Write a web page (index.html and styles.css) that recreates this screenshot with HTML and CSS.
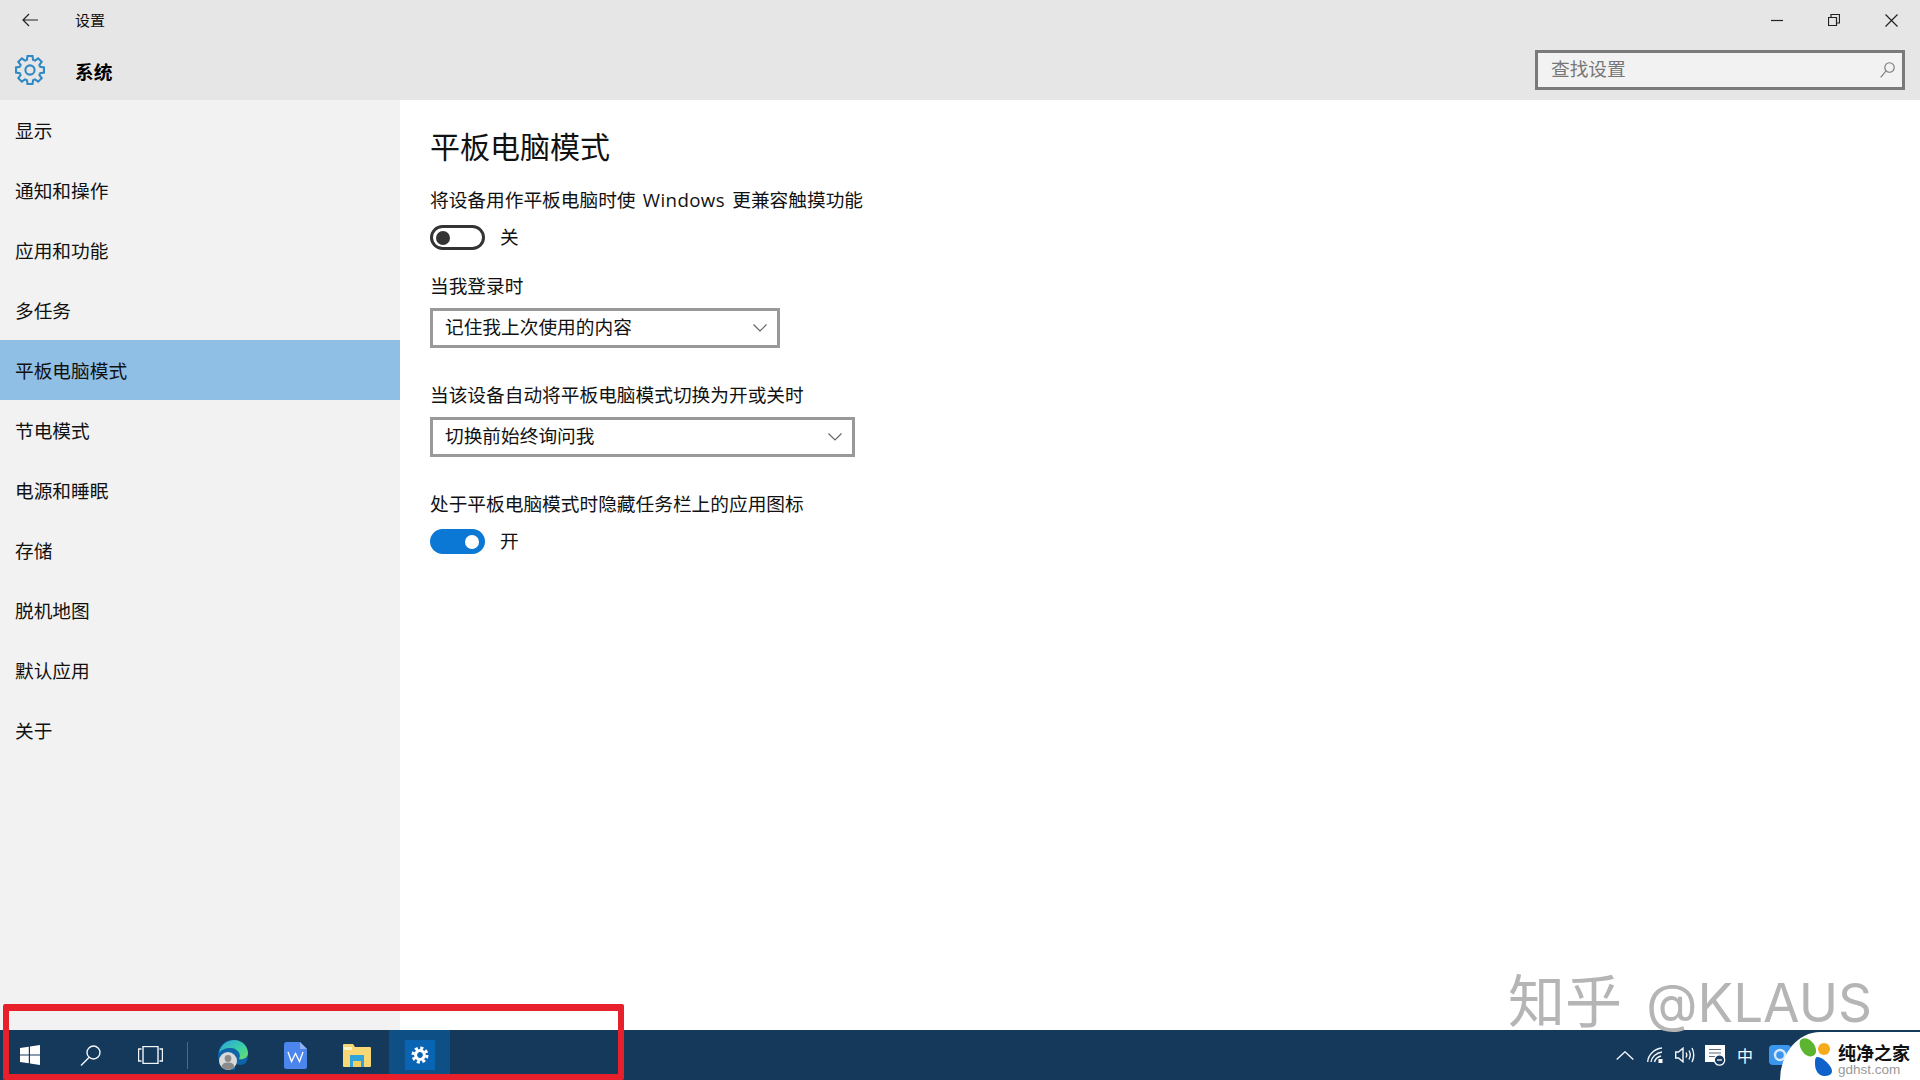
FILE: index.html

```html
<!DOCTYPE html>
<html lang="zh-CN">
<head>
  <meta charset="UTF-8" />
  <title>设置</title>
  <link rel="stylesheet" href="styles.css">
</head>
<body>

<svg class="defs" width="0" height="0">
  <defs>
    <path id="tooth" d="M-4.02-9.7 L-3.1-10.2 L-2.5-14 H2.5 L3.1-10.2 L4.02-9.7" />
  </defs>
</svg>

<div class="window">
  <header class="header">
    <div class="titlebar">
      <svg class="back" width="16" height="14" viewBox="0 0 16 14"><path d="M7 1 L1 7 L7 13 M1 7 H16" /></svg>
      <span class="app-name">设置</span>
      <div class="win-controls">
        <svg width="12" height="12" viewBox="0 0 12 12"><path d="M0 6.5 H12" /></svg>
        <svg width="12" height="12" viewBox="0 0 12 12"><path d="M.5 3.500 H8.500 V11.500 H.5 Z M3 3 V.5 H11.500 V9 H9" /></svg>
        <svg width="13" height="13" viewBox="0 0 13 13"><path d="M.5 .5 L12.500 12.500 M12.500 .5 L.5 12.500" /></svg>
      </div>
    </div>
    <div class="pagebar">
      <svg class="gear" width="30" height="30" viewBox="-15 -15 30 30">
        <circle r="4.6" />
        <use href="#tooth" />
        <use href="#tooth" transform="rotate(45)" />
        <use href="#tooth" transform="rotate(90)" />
        <use href="#tooth" transform="rotate(135)" />
        <use href="#tooth" transform="rotate(180)" />
        <use href="#tooth" transform="rotate(225)" />
        <use href="#tooth" transform="rotate(270)" />
        <use href="#tooth" transform="rotate(315)" />
      </svg>
      <span class="page-name">系统</span>
      <div class="search">
        <span>查找设置</span>
        <svg width="15" height="16" viewBox="0 0 15 16"><circle cx="9.5" cy="5.5" r="4.7" /><path d="M6 9 L.7 15.3" /></svg>
      </div>
    </div>
  </header>

  <div class="body-row">
    <nav class="sidebar">
      <div class="nav-item">显示</div>
      <div class="nav-item">通知和操作</div>
      <div class="nav-item">应用和功能</div>
      <div class="nav-item">多任务</div>
      <div class="nav-item active">平板电脑模式</div>
      <div class="nav-item">节电模式</div>
      <div class="nav-item">电源和睡眠</div>
      <div class="nav-item">存储</div>
      <div class="nav-item">脱机地图</div>
      <div class="nav-item">默认应用</div>
      <div class="nav-item">关于</div>
    </nav>

    <main class="content">
      <h1>平板电脑模式</h1>

      <div class="label first">将设备用作平板电脑时使 <span class="latin">Windows</span> 更兼容触摸功能</div>
      <div class="toggle-row">
        <div class="toggle"><i></i></div>
        <span>关</span>
      </div>

      <div class="label login">当我登录时</div>
      <div class="select select-short">
        <span>记住我上次使用的内容</span>
        <svg width="14" height="8" viewBox="0 0 14 8"><path d="M.5 .5 L7 7 L13.500 .5" /></svg>
      </div>

      <div class="label">当该设备自动将平板电脑模式切换为开或关时</div>
      <div class="select select-long">
        <span>切换前始终询问我</span>
        <svg width="14" height="8" viewBox="0 0 14 8"><path d="M.5 .5 L7 7 L13.500 .5" /></svg>
      </div>

      <div class="label">处于平板电脑模式时隐藏任务栏上的应用图标</div>
      <div class="toggle-row">
        <div class="toggle on"><i></i></div>
        <span>开</span>
      </div>
    </main>
  </div>
</div>

<footer class="taskbar">
  <div class="slot">
    <svg width="20" height="20" viewBox="0 0 20 20"><path class="white" d="M0 3 L8.800 1.700 V9.400 H0 Z M10 1.500 L20 0 V9.400 H10 Z M0 10.600 H8.800 V18.300 L0 17 Z M10 10.600 H20 V20 L10 18.500 Z" /></svg>
  </div>
  <div class="slot">
    <svg class="line" width="21" height="21" viewBox="0 0 21 21"><circle cx="13.5" cy="7.5" r="6.5" /><path d="M9 12.500 L1 20.500" /></svg>
  </div>
  <div class="slot">
    <svg class="line" width="25" height="18" viewBox="0 0 25 18"><rect x="5" y=".5" width="15" height="17" /><path d="M3.500 3 H.5 V15 H3.500 M21.500 3 H24.500 V15 H21.500" /></svg>
  </div>
  <div class="divider"></div>
  <div class="apps">
    <div class="slot">
      <svg width="32" height="32" viewBox="0 0 32 32">
        <defs>
          <linearGradient id="edgeTop" x1="0" y1="0" x2="1" y2="1">
            <stop offset="0" stop-color="#2f9fe0" />
            <stop offset=".55" stop-color="#38cfa8" />
            <stop offset="1" stop-color="#6fdc6a" />
          </linearGradient>
        </defs>
        <circle cx="16" cy="16" r="15" fill="#0f63a8" />
        <path d="M2 14 C4 4 12 1 17 1 C26 1 31 8 31 14 C31 19 26 21 22 20 C25 15 20 9 14 9 C8 9 4 11 2 14 Z" fill="url(#edgeTop)" />
        <path d="M18 31 C24 31 28 27 29 24 C25 27 20 26 18 24 Z" fill="#14395b" />
        <circle cx="11" cy="22" r="9" fill="#d9d9d9" />
        <circle cx="11" cy="19.5" r="3.4" fill="#8a8a8a" />
        <path d="M4.500 28 C5.500 24 8 23.500 11 23.500 C14 23.500 16.500 24 17.500 28 C14 31.500 8 31.500 4.500 28 Z" fill="#8a8a8a" />
      </svg>
    </div>
    <div class="slot">
      <svg width="23" height="27" viewBox="0 0 23 27">
        <path d="M2.500 0 H16 L23 7 V24.500 A2.500 2.500 0 0 1 20.500 27 H2.500 A2.500 2.500 0 0 1 0 24.500 V2.500 A2.500 2.500 0 0 1 2.500 0 Z" fill="#4c86ec" />
        <path d="M16 0 L23 7 H16 Z" fill="#8db1f3" />
        <path class="word-w" d="M4 10 L7.500 19.500 L11.500 11.500 L15.500 19.500 L19 10" />
      </svg>
    </div>
    <div class="slot">
      <svg width="28" height="23" viewBox="0 0 28 23">
        <path d="M0 1 A1 1 0 0 1 1 0 H10 L12 3 H27 A1 1 0 0 1 28 4 V22 A1 1 0 0 1 27 23 H1 A1 1 0 0 1 0 22 Z" fill="#f8d775" />
        <path d="M1 3 H9 V6 H1 Z" fill="#fdf3c4" />
        <path d="M7 11 H21 V23 H18 V17 H10 V23 H7 Z" fill="#2fa3dc" />
        <path d="M10 17 H18 V23 H10 Z" fill="#f2cf63" />
      </svg>
    </div>
    <div class="slot running">
      <div class="tile">
        <svg class="mini-gear" width="20" height="20" viewBox="-10 -10 20 20">
          <circle class="ring" r="4.4" />
          <circle class="cogs" r="7" />
        </svg>
      </div>
    </div>
  </div>

  <div class="tray">
    <div class="tray-slot">
      <svg class="line" width="18" height="9" viewBox="0 0 18 9"><path d="M.7 8.500 L9 .8 L17.300 8.500" /></svg>
    </div>
    <div class="tray-slot">
      <svg class="line" width="16" height="16" viewBox="0 0 16 16"><path d="M.7 15 C1 8 7 2 15 1 M4 15 C4.500 10 9 6 15 5 M7.500 15 C8 12.500 10.500 10 14 9" /><rect class="white" x="11.5" y="12" width="4" height="4" stroke="none" /></svg>
    </div>
    <div class="tray-slot">
      <svg class="line" width="20" height="16" viewBox="0 0 20 16"><path d="M.7 5 H3.500 L8 1.200 V14.800 L3.500 11 H.7 Z M11 5.500 Q12.500 8 11 10.500 M14 3.500 Q16.500 8 14 12.500 M17 1 Q20.500 8 17 15" /></svg>
    </div>
    <div class="tray-slot">
      <svg width="21" height="21" viewBox="0 0 21 21">
        <rect class="white" width="20" height="17" />
        <path class="note-lines" d="M4 4.500 H16 M4 8 H16 M4 11.500 H11" />
        <circle class="note-dot" cx="14.5" cy="15" r="5.2" />
        <path class="note-minus" d="M12 15 H17" />
      </svg>
    </div>
    <div class="tray-slot ime">中</div>
    <div class="tray-slot">
      <svg width="22" height="20" viewBox="0 0 22 20"><rect width="22" height="20" rx="4" fill="#3c96ee" /><circle cx="11" cy="10" r="5" fill="none" stroke="#d6e8fb" stroke-width="2.4" /></svg>
    </div>
  </div>
</footer>

<!-- things painted over the screenshot -->
<div class="red-box"></div>
<div class="watermark"><span class="wm-cn">知乎</span> <span class="wm-en">@KLAUS</span></div>
<div class="badge">
  <svg width="36" height="38" viewBox="0 0 36 38">
    <path d="M5 .5 C11 -1 19 7 18 14 C17.500 18 13 19.500 9 17.500 C3 14.500 -2 2.500 5 .5 Z" fill="#5cb531" />
    <circle cx="26" cy="11" r="6" fill="#f6ab1c" />
    <path d="M19 19 C24 18 34 28 34 33 C34 37 30 38 26 38 C21 38 17 33 17 26 C17 22 17 19.500 19 19 Z" fill="#0f62c9" />
  </svg>
  <div class="badge-text">
    <div class="badge-cn">纯净之家</div>
    <div class="badge-en">gdhst.com</div>
  </div>
</div>

</body>
</html>
```

FILE: styles.css

```css
* {
  box-sizing: border-box;
}
body {
  font-family: "Noto Sans CJK SC", sans-serif;
  font-size: 18.7px;
  color: #111;
  background-color: #fff;
  margin: 0;
  height: 1080px;
  overflow: hidden;
  display: flex;
  flex-direction: column;
  position: relative;
}
.defs {
  position: absolute;
}
.window {
  flex: 1;
  display: flex;
  flex-direction: column;
  min-height: 0;
}

/* header */
.header {
  height: 100px;
  background-color: #e6e6e6;
}
.titlebar {
  height: 40px;
  display: flex;
  align-items: center;
  padding-left: 22px;
}
.back path,
.win-controls path {
  fill: none;
  stroke: #222;
  stroke-width: 1.2;
}
.app-name {
  font-size: 15px;
  margin: 0 0 2px 37px;
}
.win-controls {
  margin-left: auto;
  display: flex;
  align-items: center;
  gap: 45px;
  padding-right: 22px;
}
.pagebar {
  height: 60px;
  display: flex;
  align-items: center;
  padding-left: 15px;
  padding-right: 15px;
}
.gear circle,
.gear use {
  fill: none;
  stroke: #2f89c5;
  stroke-width: 2.1;
}
.page-name {
  font-size: 18.7px;
  font-weight: 700;
  margin-left: 30px;
  color: #000;
}
.search {
  margin-left: auto;
  width: 370px;
  height: 40px;
  border: 3px solid #7a7a7a;
  background-color: #f2f2f2;
  display: flex;
  align-items: center;
  justify-content: space-between;
  padding: 0 7px 0 13px;
  color: #777;
}
.search span {
  margin-bottom: 6px;
}
.search svg {
  fill: none;
  stroke: #777;
  stroke-width: 1.1;
}

/* sidebar */
.body-row {
  flex: 1;
  display: flex;
  min-height: 0;
}
.sidebar {
  width: 400px;
  background-color: #f2f2f2;
}
.nav-item {
  height: 60px;
  line-height: 60px;
  padding-left: 15px;
}
.nav-item.active {
  background-color: #90bfe6;
}

/* content */
.content {
  flex: 1;
  padding: 25px 30px 0;
}
h1 {
  font-size: 30px;
  font-weight: 400;
  line-height: 40px;
  margin: 0;
  color: #111;
}
.label {
  line-height: 28px;
  margin-top: 32px;
}
.label.first {
  margin-top: 20px;
}
.label.login {
  margin-top: 21px;
}
.latin {
  font-family: "Open Sans", sans-serif;
  letter-spacing: 0.4px;
  line-height: 1;
  margin: 0 3px;
}
.toggle-row {
  display: flex;
  align-items: center;
  height: 25px;
  margin-top: 12px;
  gap: 15px;
}
.toggle-row span {
  margin-bottom: 4px;
}
.toggle {
  width: 55px;
  height: 25px;
  border: 3px solid #333;
  border-radius: 13px;
  display: flex;
  align-items: center;
  padding-left: 3px;
}
.toggle i {
  width: 14px;
  height: 14px;
  border-radius: 50%;
  background-color: #333;
}
.toggle.on {
  background-color: #0a78d4;
  border-color: #0a78d4;
  justify-content: flex-end;
  padding: 0 3px 0 0;
}
.toggle.on i {
  background-color: #fff;
}
.select {
  height: 40px;
  border: 3px solid #999;
  margin-top: 9px;
  display: flex;
  align-items: center;
  justify-content: space-between;
  padding: 0 10px 0 12px;
}
.select span {
  margin-bottom: 6px;
}
.select-short {
  width: 350px;
}
.select-long {
  width: 425px;
}
.select svg {
  fill: none;
  stroke: #666;
  stroke-width: 1.2;
}

/* taskbar */
.taskbar {
  height: 50px;
  background-color: #14395b;
  display: flex;
  align-items: center;
}
.slot {
  width: 60px;
  height: 50px;
  display: flex;
  align-items: center;
  justify-content: center;
}
.white {
  fill: #fff;
}
.line {
  fill: none;
  stroke: #f2f6fa;
  stroke-width: 1.4;
}
.line .white {
  fill: #fff;
}
.divider {
  width: 1px;
  height: 27px;
  background-color: #4d6a85;
  margin: 0 15px 0 7px;
}
.apps {
  display: flex;
  gap: 2px;
}
.word-w {
  fill: none;
  stroke: #fff;
  stroke-width: 1.3;
}
.running {
  background-color: #0e4f85;
  width: 61px;
}
.tile {
  width: 30px;
  height: 30px;
  background-color: #0a64b4;
  display: flex;
  align-items: center;
  justify-content: center;
}
.ring {
  fill: none;
  stroke: #fff;
  stroke-width: 3;
}
.cogs {
  fill: none;
  stroke: #fff;
  stroke-width: 3;
  stroke-dasharray: 3.1 2.4;
}
.tray {
  margin-left: auto;
  display: flex;
  align-items: center;
  padding-right: 125px;
}
.tray-slot {
  width: 30px;
  height: 50px;
  display: flex;
  align-items: center;
  justify-content: center;
}
.tray-slot:last-child {
  margin-left: 5px;
}
.note-lines {
  fill: none;
  stroke: #5a6b7a;
  stroke-width: 1.2;
}
.note-dot {
  fill: #14395b;
  stroke: #fff;
  stroke-width: 1.3;
}
.note-minus {
  stroke: #fff;
  stroke-width: 1.3;
}
.ime {
  color: #fff;
  font-size: 16px;
}

/* overlays */
.red-box {
  position: absolute;
  left: 3px;
  top: 1004px;
  width: 621px;
  height: 76px;
  border: 6px solid #e8202c;
  border-top-width: 7px;
  border-radius: 2px;
}
.watermark {
  position: absolute;
  left: 1508px;
  top: 964px;
  line-height: 66px;
  color: #b5b5b5;
  white-space: nowrap;
  font-size: 55px;
}
.wm-cn {
  font-size: 57px;
}
.wm-en {
  font-family: "Inter", sans-serif;
  font-size: 53px;
  margin-left: 12px;
}
.badge {
  position: absolute;
  right: 0;
  bottom: 0;
  width: 140px;
  height: 48px;
  background-color: #fff;
  border-top-left-radius: 40px 48px;
  display: flex;
  align-items: flex-start;
  padding: 6px 0 0 18px;
}
.badge-text {
  margin-left: 4px;
  margin-top: 3px;
}
.badge-cn {
  font-size: 18px;
  font-weight: 700;
  line-height: 22px;
  color: #111;
}
.badge-en {
  font-family: "Liberation Sans", sans-serif;
  font-size: 13.5px;
  line-height: 14px;
  color: #999;
}
```
